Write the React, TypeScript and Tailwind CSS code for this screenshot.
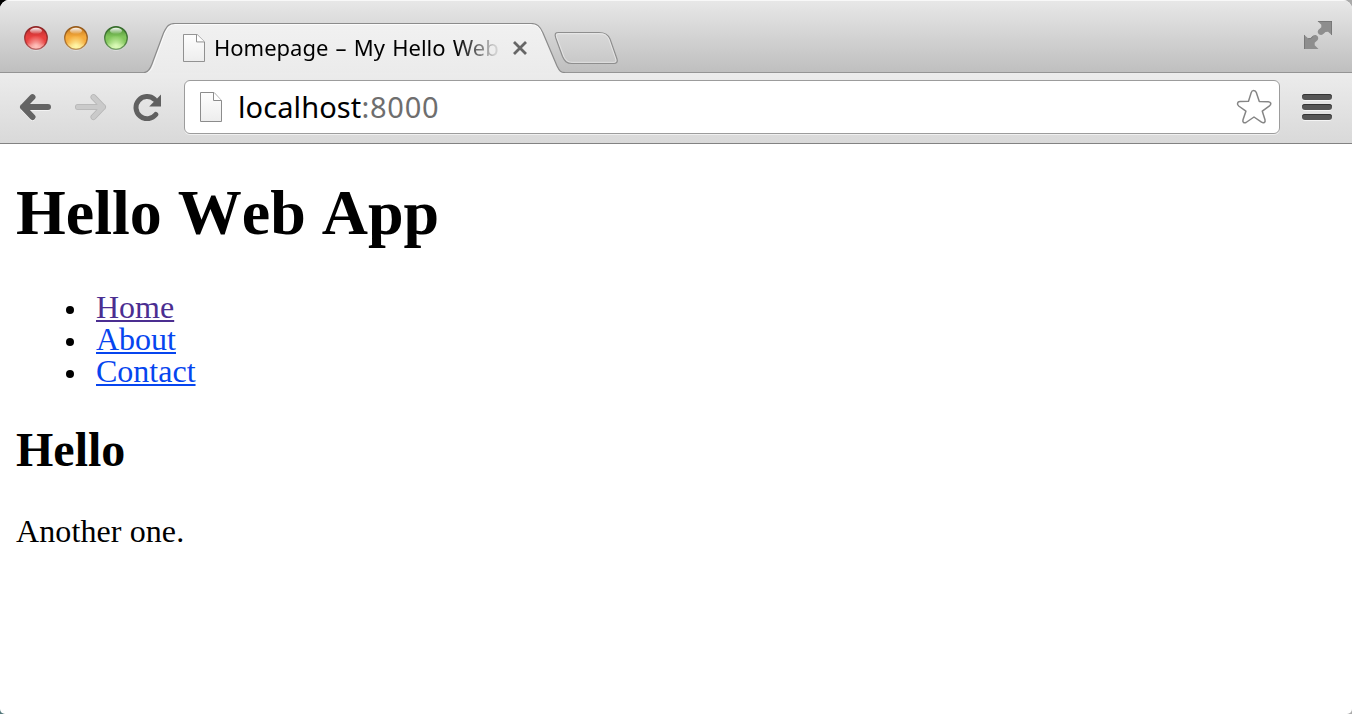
import React from "react";

function TrafficLight({ id, edge, dark, mid, light }: { id: string; edge: string; dark: string; mid: string; light: string }) {
  return (
    <svg className="block h-[26px] w-[26px]" viewBox="0 0 26 26">
      <defs>
        <linearGradient id={`${id}-body`} x1="0" y1="0" x2="0" y2="1">
          <stop offset="0" stopColor={dark} />
          <stop offset="0.45" stopColor={mid} />
          <stop offset="0.72" stopColor={mid} />
          <stop offset="1" stopColor={light} />
        </linearGradient>
        <radialGradient id={`${id}-glow`} cx="0.5" cy="0.88" r="0.5">
          <stop offset="0" stopColor={light} />
          <stop offset="1" stopColor={light} stopOpacity="0" />
        </radialGradient>
        <linearGradient id={`${id}-shine`} x1="0" y1="0" x2="0" y2="1">
          <stop offset="0" stopColor="#fff" stopOpacity="0.95" />
          <stop offset="1" stopColor="#fff" stopOpacity="0.1" />
        </linearGradient>
        <linearGradient id={`${id}-edge`} x1="0" y1="0" x2="0" y2="1">
          <stop offset="0" stopColor={edge} />
          <stop offset="1" stopColor={edge} stopOpacity="0.6" />
        </linearGradient>
      </defs>
      <circle cx="13" cy="14" r="11.8" fill="#fff" fillOpacity="0.45" />
      <circle cx="13" cy="13" r="11.3" fill={`url(#${id}-body)`} stroke={`url(#${id}-edge)`} strokeWidth="1.4" />
      <circle cx="13" cy="13" r="10.6" fill={`url(#${id}-glow)`} />
      <ellipse cx="13" cy="5.8" rx="6" ry="3" fill={`url(#${id}-shine)`} />
    </svg>
  );
}

function PageIcon({ id, className }: { id: string; className: string }) {
  return (
    <svg className={className} viewBox="0 0 22 30" preserveAspectRatio="none">
      <defs>
        <linearGradient id={id} x1="0" y1="0" x2="0" y2="1">
          <stop offset="0" stopColor="#fefefe" />
          <stop offset="1" stopColor="#ededed" />
        </linearGradient>
      </defs>
      <path d="M.5 .5H14L21.5 8.5V29.5H.5Z" fill={`url(#${id})`} stroke="#8c8c8c" />
      <path d="M13.5 .5V8.5H21.5" fill="#fff" stroke="#8c8c8c" />
    </svg>
  );
}

function TabShape() {
  return (
    <svg className="absolute left-0 top-0 h-[50px] w-[424px]" viewBox="0 0 424 50">
      <defs>
        <linearGradient id="tab-fill" x1="0" y1="0" x2="0" y2="1">
          <stop offset="0" stopColor="#f1f1f1" />
          <stop offset="1" stopColor="#ebebeb" />
        </linearGradient>
      </defs>
      <path d="M0 49.5C4 49.5 6 46.5 8 41L19.500 10C23 2.500 25 .5 31 .5H387C393 .5 396 3 399 10L413 43C415.500 48 416.500 49.5 421 49.5V50H0Z" fill="url(#tab-fill)" />
      <path d="M2 50C6 49 8 46.500 9.500 41.5L20.700 10.5C24 4 26 1.5 32 1.5H386C393 1.5 395 4 398 10.5" fill="none" stroke="#fff" strokeOpacity="0.7" />
      <path d="M0 49.5C4 49.5 6 46.5 8 41L19.500 10C23 2.500 25 .5 31 .5H387C393 .5 396 3 399 10L413 43C415.500 48 416.500 49.5 421 49.5" fill="none" stroke="#8b8b8b" strokeWidth="1.2" />
    </svg>
  );
}

function TitleBar() {
  return (
    <div className="flex h-[73px] shrink-0 items-start border-b border-[#949494] bg-linear-to-b from-[#e8e8e8] to-[#bfbfbf] shadow-[inset_0_1px_0_#f8f8f8]">
      <div className="flex gap-[14px] pl-[23px] pt-[25px]">
        <TrafficLight id="close" edge="#8d2526" dark="#b3292b" mid="#e8403f" light="#ffc3bd" />
        <TrafficLight id="minimize" edge="#94591a" dark="#c1731c" mid="#f5ab3c" light="#fff7a8" />
        <TrafficLight id="zoom" edge="#34692b" dark="#42852f" mid="#82c65c" light="#dcfbb9" />
      </div>
      <div className="relative ml-[15px] mt-[23px] h-[50px] w-[418px]">
        <TabShape />
        <div className="relative flex h-[50px] items-center pl-[39px]">
          <PageIcon id="tab-page" className="block h-7 w-[22px] shrink-0" />
          <div className="-mt-[2px] ml-[9px] w-[287px] overflow-hidden whitespace-nowrap bg-linear-to-r from-black from-82% to-[#d0d0d0] to-[98%] bg-clip-text font-['Noto_Sans','Open_Sans',sans-serif] text-[22px] leading-[30px] text-transparent [word-spacing:1.5px]">
            Homepage – My Hello Web
          </div>
          <svg className="ml-[11px] block h-4 w-4 shrink-0" viewBox="0 0 16 16">
            <path d="M2 2L14 14M14 2L2 14" fill="none" stroke="#666" strokeWidth="2.800" />
          </svg>
        </div>
      </div>
      <svg className="-ml-[8px] mt-[31px] block h-[35px] w-[65px]" viewBox="0 0 65 35">
        <defs>
          <linearGradient id="new-tab" x1="0" y1="0" x2="0" y2="1">
            <stop offset="0" stopColor="#d9d9d9" />
            <stop offset="1" stopColor="#c8c8c8" />
          </linearGradient>
        </defs>
        <path d="M4.500 1.5H45C51 1.5 54 3 56 8L63 28C64 31 62.500 32.5 60 32.5H18C12.5 32.5 10.500 30 8.500 25.500L1.800 7C.3 2.500 1.500 1.500 4.500 1.500Z" fill="url(#new-tab)" stroke="#8e8e8e" strokeWidth="1.2" />
        <path d="M5 2.700H45C50.500 2.700 53 4 55 8.500L61.700 28C62.500 30.500 61 31.300 59.500 31.300H18.500C13.500 31.300 11.500 29 9.700 25L3 7C2 4 2 2.700 5 2.700Z" fill="none" stroke="#fff" strokeOpacity="0.45" />
      </svg>
      <svg className="ml-auto mr-5 mt-[21px] block h-7 w-7" viewBox="0 0 28 28">
        <path d="M13.500 0H28V14.300L24 10.700L21.500 11L19 13.300C16 15.500 12.300 12 14.300 9L17.300 6.300V3.800Z" fill="#8e8e8e" />
        <path d="M14.500 28H0V13.700L4 17.300L6.500 17L9 14.700C12 12.500 15.700 16 13.700 19L10.700 21.700V24.200Z" fill="#8e8e8e" />
        <path d="M14 .5H28M27.500 0V14M.5 14V28M4 17.800L6.700 17.500L9.200 15.200" fill="none" stroke="#707070" strokeOpacity="0.7" />
      </svg>
    </div>
  );
}

function Toolbar() {
  return (
    <div className="flex h-[71px] shrink-0 items-start border-b border-[#828282] bg-linear-to-b from-[#ececec] to-[#d9d9d9]">
      <svg className="ml-[19px] mt-5 block h-7 w-8" viewBox="0 0 32 28">
        <path d="M13.500 4.200L4 14L13.500 24M4 14H29" transform="translate(0 1)" fill="none" stroke="#fff" strokeOpacity="0.6" strokeWidth="6" strokeLinecap="round" strokeLinejoin="round" />
        <path d="M13.500 4.200L4 14L13.500 24M4 14H29" fill="none" stroke="#646464" strokeWidth="6" strokeLinecap="round" strokeLinejoin="round" />
      </svg>
      <svg className="ml-6 mt-5 block h-7 w-8" viewBox="0 0 32 28">
        <path d="M18.500 4.200L28 14L18.500 24M28 14H3" fill="none" stroke="#b5b5b5" strokeWidth="6" strokeLinecap="round" strokeLinejoin="round" />
        <path d="M18.500 4.200L28 14L18.500 24M28 14H3" fill="none" stroke="#cacaca" strokeWidth="4.500" strokeLinecap="round" strokeLinejoin="round" />
      </svg>
      <svg className="ml-[26px] mt-5 block h-7 w-[29px]" viewBox="0 0 29 28">
        <path d="M22.800 21.500A11.100 11.100 0 1 1 21.500 6.300" fill="none" stroke="#606060" strokeWidth="5" strokeLinecap="round" />
        <path d="M28 1.500V13.500H16.200Z" fill="#606060" />
      </svg>
      <div className="ml-[22px] mt-[7px] flex h-[54px] w-[1096px] items-center rounded-[6px] border border-[#9c9c9c] bg-white shadow-[0_1px_0_#f0f0f0]">
        <PageIcon id="address-page" className="ml-[15px] block h-[30px] w-[22px] shrink-0" />
        <div className="ml-4 whitespace-nowrap font-['Noto_Sans','Open_Sans',sans-serif] text-[29px] leading-[40px] tracking-[0.1px] text-black">
          localhost<span className="tracking-[0.75px] text-[#6e6e6e]">:8000</span>
        </div>
        <svg className="ml-auto mr-[7px] block h-9 w-9" viewBox="0 0 36 36">
          <path d="M15.200 3.600C16 .9 19.400 .9 20.300 3.600L23.300 12.400L32.300 12.700C35.200 12.900 35.400 15.300 33.500 16.800L26.300 22.200L29 30.700C29.700 33.500 27.500 34.500 25.500 33.200L18 28L10 33.500C8 34.500 6.300 33.100 7 30.700L9.900 22.200L2.700 17C.7 15.300 1.200 12.700 4 12.600L12.500 12.300Z" fill="#fff" stroke="#858585" strokeWidth="1.500" strokeLinejoin="round" />
        </svg>
      </div>
      <div className="ml-[22px] mt-[21px] flex flex-col gap-1">
        <div className="h-[6px] w-[30px] rounded-full bg-[#555] shadow-[inset_0_1px_0_#343434,0_1px_0_#f5f5f5]" />
        <div className="h-[6px] w-[30px] rounded-full bg-[#555] shadow-[inset_0_1px_0_#343434,0_1px_0_#f5f5f5]" />
        <div className="h-[6px] w-[30px] rounded-full bg-[#555] shadow-[inset_0_1px_0_#343434,0_1px_0_#f5f5f5]" />
      </div>
    </div>
  );
}

const links = [
  { label: "Home", color: "text-[#4b2e91]" },
  { label: "About", color: "text-[#0645ef]" },
  { label: "Contact", color: "text-[#0645ef]" },
];

export default function App() {
  return (
    <div className="h-[714px] w-[1352px] overflow-hidden bg-[linear-gradient(to_right,transparent_50%,#aaa_50%),linear-gradient(to_bottom,#000_50%,#53777a_50%)]">
      <div className="flex h-full flex-col overflow-hidden rounded-b-[5px] rounded-t-[9px] bg-white">
        <TitleBar />
        <Toolbar />
        <main className="pl-4 font-['Liberation_Serif',serif] text-[32px] leading-8 text-black [font-kerning:none]">
          <h1 className="mt-[33px] text-[64px] font-bold leading-[72px]">Hello Web App</h1>
          <ul className="mt-[42px]">
            {links.map((link) => (
              <li key={link.label} className="flex h-8 items-center pl-[50px]">
                <span className="mt-[5px] h-2 w-2 rounded-full bg-black" />
                <a className={`ml-[22px] leading-8 underline decoration-2 underline-offset-[2px] [text-decoration-skip-ink:none] ${link.color}`}>{link.label}</a>
              </li>
            ))}
          </ul>
          <h2 className="mt-[35px] text-[48px] font-bold leading-[56px]">Hello</h2>
          <p className="mt-[37px] tracking-[0.1px]">Another one.</p>
        </main>
      </div>
    </div>
  );
}
